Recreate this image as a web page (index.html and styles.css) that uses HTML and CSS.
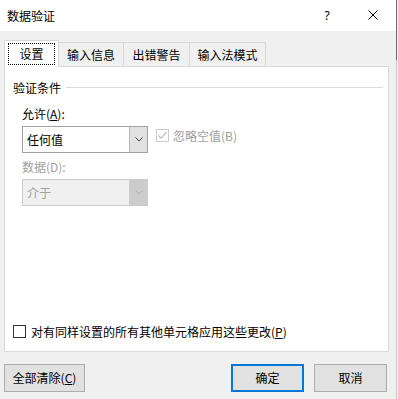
FILE: index.html
```html
<!DOCTYPE html>
<html lang="zh-CN">
<head>
<meta charset="utf-8">
<title>数据验证</title>
<link rel="stylesheet" href="styles.css">
</head>
<body>
<div class="dialog">
  <div class="titlebar">
    <span class="title">数据验证</span>
    <div class="title-btns">
      <span class="tbtn help">?</span>
      <span class="tbtn close"><svg width="10" height="10" viewBox="0 0 10 10"><path d="M0.5 0.5 L9.5 9.5 M9.5 0.5 L0.5 9.5" stroke="#000" stroke-width="1" fill="none"/></svg></span>
    </div>
  </div>

  <div class="tabs">
    <div class="tab tab-sel"><span class="focus">设置</span></div>
    <div class="tab tab2">输入信息</div>
    <div class="tab tab3">出错警告</div>
    <div class="tab tab4">输入法模式</div>
  </div>

  <div class="panel">
    <div class="group-head">
      <span class="group-title">验证条件</span>
      <span class="group-line"></span>
    </div>
    <div class="section">
      <div class="label label-allow">允许(<u>A</u>):</div>
      <div class="combo-row">
        <div class="combo">
          <span class="combo-text">任何值</span>
          <span class="combo-btn"><svg width="8" height="5" viewBox="0 0 8 5"><path d="M0.5 0.5 L4 4 L7.5 0.5" stroke="#404040" stroke-width="1" fill="none"/></svg></span>
        </div>
        <div class="check check-dis">
          <span class="box box-dis"><svg width="11" height="11" viewBox="0 0 11 11"><path d="M1.5 5.5 L4.2 8.3 L9.5 2.2" stroke="#b4b4b4" stroke-width="1.1" fill="none"/></svg></span>
          <span class="check-text dis">忽略空值(B)</span>
        </div>
      </div>
      <div class="label label-data dis">数据(D):</div>
      <div class="combo combo-dis">
        <span class="combo-text dis">介于</span>
        <span class="combo-btn btn-dis"><svg width="8" height="5" viewBox="0 0 8 5"><path d="M0.5 0.5 L4 4 L7.5 0.5" stroke="#b0b0b0" stroke-width="1" fill="none"/></svg></span>
      </div>
    </div>
    <div class="check check-apply">
      <span class="box"></span>
      <span class="check-text">对有同样设置的所有其他单元格应用这些更改(<u>P</u>)</span>
    </div>
  </div>

  <div class="buttons">
    <button class="btn btn-clear">全部清除(<u>C</u>)</button>
    <span class="spacer"></span>
    <button class="btn btn-ok">确定</button>
    <button class="btn btn-cancel">取消</button>
  </div>
</div>
</body>
</html>
```

FILE: styles.css
```css
html, body {
  margin: 0;
  padding: 0;
}
body {
  width: 398px;
  height: 399px;
  overflow: hidden;
  background: #f0f0f0;
  font-family: "Noto Sans CJK SC", "Noto Sans", sans-serif;
  font-size: 12px;
  line-height: 16px;
  color: #000;
}
.dialog {
  position: relative;
  width: 396px;
  height: 399px;
  border-right: 1px solid #c8c8c8;
  display: flex;
  flex-direction: column;
}
.dialog::after {
  content: "";
  position: absolute;
  right: -1px;
  top: 0;
  width: 1px;
  height: 60px;
  background: #6e6e6e;
}
.titlebar {
  height: 31px;
  background: #fff;
  display: flex;
  align-items: center;
  padding-left: 7px;
}
.title {
  flex: 1;
}
.title-btns {
  display: flex;
  height: 31px;
}
.tbtn {
  width: 46px;
  height: 31px;
  display: flex;
  align-items: center;
  justify-content: center;
}
.help {
  font-family: "Noto Sans", sans-serif;
  font-size: 12px;
  padding-left: 0;
}
.close svg {
  display: block;
  margin-top: -2px;
}

/* tabs */
.tabs {
  display: flex;
  align-items: flex-end;
  height: 26px;
  margin-top: 9px;
  padding-left: 4px;
}
.tab {
  box-sizing: border-box;
  height: 24px;
  border-top: 1px solid #d9d9d9;
  border-right: 1px solid #d9d9d9;
  background: #f0f0f0;
  display: flex;
  align-items: center;
  justify-content: center;
  padding-top: 1px;
}
.tab-sel {
  width: 55px;
  height: 27px;
  margin-bottom: -1px;
  border-left: 1px solid #d9d9d9;
  background: #fff;
  position: relative;
  z-index: 1;
  padding: 2px 3px 2px 3px;
  align-items: stretch;
}
.focus {
  flex: 1;
  border: 1px dotted #000;
  display: flex;
  align-items: center;
  justify-content: center;
}
.tab2 { width: 65px; }
.tab3 { width: 66px; }
.tab4 { width: 76px; }

/* panel */
.panel {
  box-sizing: border-box;
  margin-left: 4px;
  width: 385px;
  height: 286px;
  background: #fff;
  border: 1px solid #d9d9d9;
  display: flex;
  flex-direction: column;
}
.group-head {
  display: flex;
  height: 16px;
  margin-top: 13px;
  padding-left: 8px;
  padding-right: 5px;
}
.group-line {
  flex: 1;
  height: 1px;
  background: #dcdcdc;
  margin-top: 7px;
  margin-left: 5px;
}
.section {
  padding-left: 17px;
  display: flex;
  flex-direction: column;
  align-items: flex-start;
}
.label {
  height: 16px;
}
.label-allow {
  margin-top: 10px;
}
.label-data {
  margin-top: 6px;
}
.dis {
  color: #a0a0a0;
}
.combo-row {
  display: flex;
  align-items: flex-start;
  margin-top: 4px;
}
.combo {
  box-sizing: border-box;
  width: 126px;
  height: 27px;
  border: 1px solid #a2a2a2;
  background: #fff;
  display: flex;
}
.combo-text {
  flex: 1;
  padding-left: 4px;
  display: flex;
  align-items: center;
  font-size: 12px;
}
.combo-btn {
  box-sizing: border-box;
  width: 18px;
  background: #e1e1e1;
  border-left: 1px solid #b9b9b9;
  display: flex;
  align-items: center;
  justify-content: center;
}
.combo-btn svg {
  display: block;
}
.combo-dis {
  margin-top: 4px;
  background: #f0f0f0;
  border-color: #cccccc;
}
.btn-dis {
  background: #cccccc;
  border-left-color: #cccccc;
}
.check {
  display: flex;
  align-items: center;
  height: 15px;
}
.check-dis {
  margin-top: 2px;
  margin-left: 8px;
}
.box {
  box-sizing: border-box;
  width: 13px;
  height: 13px;
  border: 1px solid #333;
  background: #fff;
  display: flex;
  align-items: center;
  justify-content: center;
}
.box-dis {
  border-color: #cccccc;
}
.box svg {
  display: block;
}
.check-text {
  margin-left: 4px;
}
.check-apply {
  margin-top: auto;
  margin-bottom: 12px;
  padding-left: 8px;
}
.check-apply .check-text {
  margin-left: 5px;
}

/* buttons */
.buttons {
  display: flex;
  margin-top: 12px;
  padding-left: 4px;
  padding-right: 9px;
}
.spacer {
  flex: 1;
}
.btn {
  box-sizing: border-box;
  height: 28px;
  margin: 0;
  padding: 0;
  background: #e1e1e1;
  border: 1px solid #adadad;
  font-family: "Noto Sans CJK SC", "Noto Sans", sans-serif;
  font-size: 12px;
  line-height: 16px;
  color: #000;
  display: flex;
  align-items: center;
  justify-content: center;
}
.btn-clear {
  width: 81px;
}
.btn-ok {
  width: 73px;
  border: 2px solid #0078d7;
  margin-right: 10px;
}
.btn-cancel {
  width: 73px;
}
u {
  text-decoration: underline;
  text-underline-offset: 1px;
}
```
